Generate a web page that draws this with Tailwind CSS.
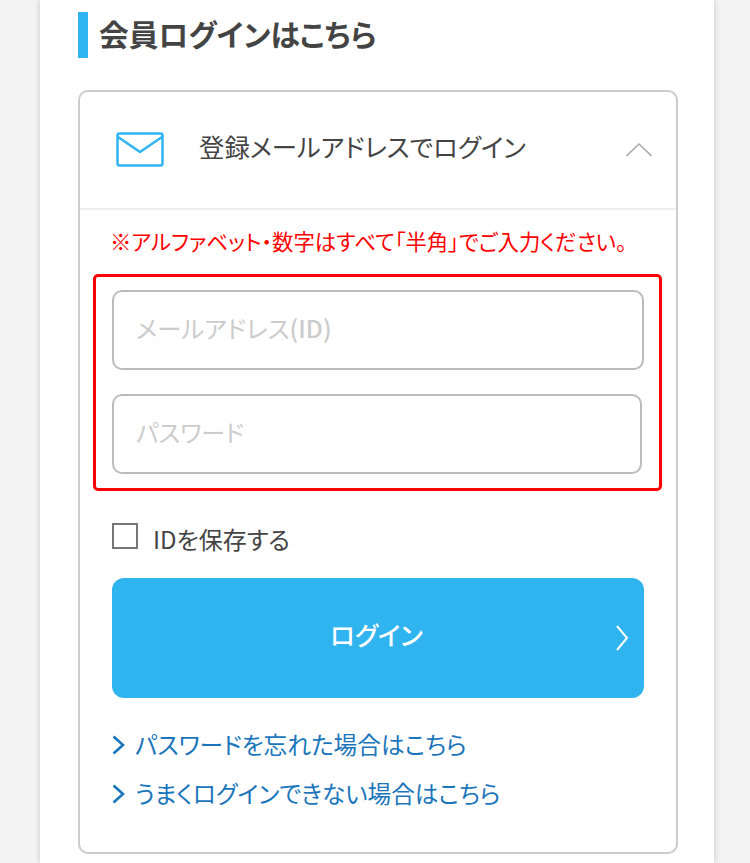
<!DOCTYPE html>
<html lang="ja">
<head>
<meta charset="utf-8">
<script src="https://cdn.jsdelivr.net/npm/@tailwindcss/browser@4"></script>
</head>
<body class="bg-[#f3f3f3] font-['Noto_Sans_CJK_JP',sans-serif] [font-feature-settings:'palt'] overflow-hidden">
<div class="h-[863px] w-[750px] overflow-hidden">
  <main class="ml-[40px] h-[863px] w-[674px] bg-white pl-[38px] pt-[12px] pr-[36px] shadow-[0_0_6px_rgba(0,0,0,0.18)]">
    <h1 class="flex h-[46px] items-center border-l-[10px] border-[#30b4f0] pb-[2px] pl-[11px] text-[29.7px] font-bold leading-none text-[#444]">会員ログインはこちら</h1>
    <section class="mt-[32px] h-[764px] w-[600px] rounded-[10px] border-2 border-[#ccc]">
      <div class="flex h-[118px] items-center border-b-2 border-[#eee] pl-[36px] pr-[24px]">
        <svg class="h-[36px] w-[48px] shrink-0" viewBox="0 0 48 36" fill="none" stroke="#30b4f0" stroke-width="2.5" stroke-linejoin="round"><rect x="1.500" y="1.500" width="45" height="32" rx="2"/><path d="M2 5l22 15L46 5"/></svg>
        <span class="mb-[6px] ml-[35px] text-[25.4px] leading-none text-[#444]">登録メールアドレスでログイン</span>
        <svg class="ml-auto h-[16px] w-[26px] shrink-0" viewBox="0 0 26 16" fill="none" stroke="#aaa" stroke-width="1.6"><path d="M0.500 14L13 2l12.500 12"/></svg>
      </div>
      <div class="pl-[13px] pr-[14px]">
        <p class="mt-[14px] pl-[17px] text-[21.4px] leading-[34px] text-[#f00]">※アルファベット・数字はすべて「半角」でご入力ください。</p>
        <div class="mt-[16px] h-[217px] w-[569px] rounded-[5px] border-[3px] border-[#f00] pl-[16px] pt-[13px]">
          <div class="flex h-[80px] w-[532px] items-center rounded-[10px] border-2 border-[#bbb] pb-[4px] pl-[22px] text-[24.4px] text-[#ccc]">メールアドレス<span class="font-medium">(ID)</span></div>
          <div class="mt-[24px] flex h-[80px] w-[530px] items-center rounded-[10px] border-2 border-[#bbb] pb-[4px] pl-[22px] text-[24px] text-[#ccc]">パスワード</div>
        </div>
        <div class="ml-[19px] mt-[32px] flex h-[35px] items-start">
          <span class="h-[26px] w-[26px] border-2 border-[#777]"></span>
          <span class="ml-[15px] mt-[1px] text-[24px] leading-[30px] text-[#444]">IDを保存する</span>
        </div>
        <button class="relative ml-[19px] mt-[20px] flex h-[120px] w-[532px] items-center justify-center rounded-[12px] bg-[#30b4f0] pb-[8px] pr-[3px] text-[25.4px] font-medium text-white">ログイン
          <svg class="absolute right-[15px] top-[47px] h-[26px] w-[14px]" viewBox="0 0 14 26" fill="none" stroke="#fff" stroke-width="2"><path d="M2 1l10 12L2 25"/></svg>
        </button>
        <ul class="ml-[19px] mt-[29px] text-[23.7px] leading-[34px] text-[#1a75bb]">
          <li class="flex items-center"><svg class="mt-[2px] h-[20px] w-[13px] shrink-0" viewBox="0 0 13 20" fill="none" stroke="#1a75bb" stroke-width="2.6"><path d="M1.500 1.500L11 10l-9.500 8.500"/></svg><span class="ml-[10px]">パスワードを忘れた場合はこちら</span></li>
          <li class="mt-[15px] flex items-center"><svg class="mt-[2px] h-[20px] w-[13px] shrink-0" viewBox="0 0 13 20" fill="none" stroke="#1a75bb" stroke-width="2.6"><path d="M1.500 1.500L11 10l-9.500 8.500"/></svg><span class="ml-[10px]">うまくログインできない場合はこちら</span></li>
        </ul>
      </div>
    </section>
  </main>
</div>
</body>
</html>
